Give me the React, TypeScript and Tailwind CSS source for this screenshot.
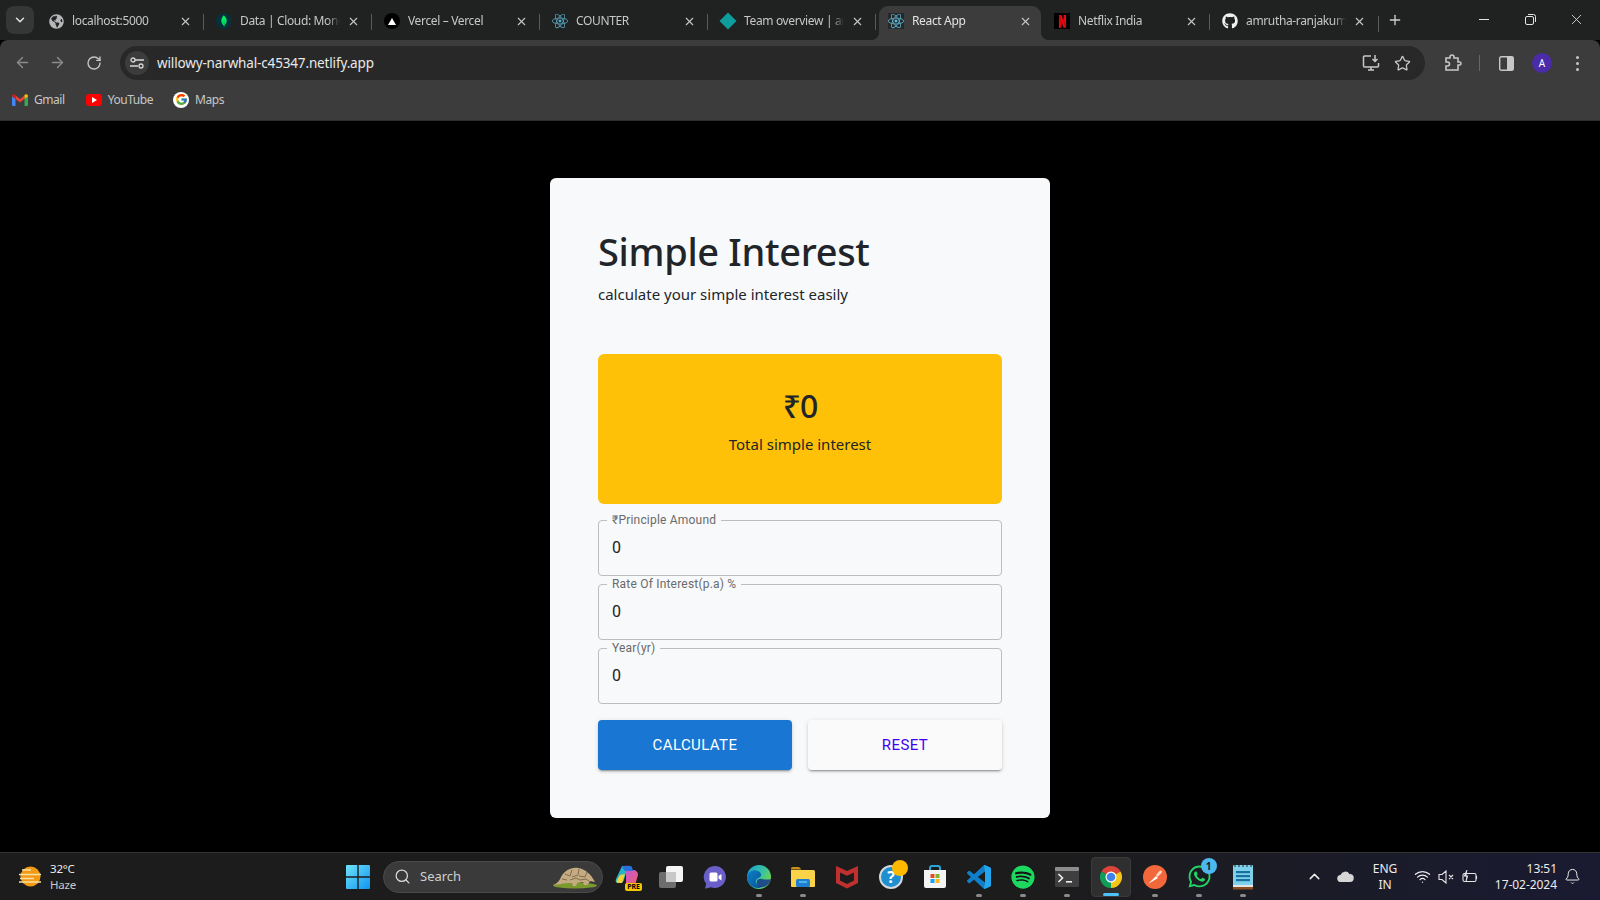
import React from "react";
import { ArrowLeft, ArrowRight, RotateCw, ChevronDown, ChevronUp, X, Plus, Star, Wifi, Bell, Search } from "lucide-react";
import { FaGithub, FaSpotify, FaWhatsapp, FaGlobeAmericas } from "react-icons/fa";
import { FcGoogle } from "react-icons/fc";
import { SiMongodb, SiNetflix, SiReact } from "react-icons/si";

const sans = "font-['Noto_Sans','Open_Sans',sans-serif]";
const roboto = "font-['Roboto','Liberation_Sans',sans-serif]";

function Tab({ icon, title, active, last }: { icon: React.ReactNode; title: string; active?: boolean; last?: boolean }) {
  return (
    <div className={`relative flex shrink-0 items-center ${active ? "z-10 ml-[3px] mr-[1px] h-[34px] w-[162px] rounded-t-[9px] bg-[#3c3c3c] pb-[4px] pl-[9px]" : "h-[34px] w-[168px] pb-[4px] pl-[12px]"}`}>
      {active && <div className="absolute -left-[8px] bottom-0 h-[8px] w-[8px] bg-[radial-gradient(circle_at_0_0,transparent_8px,#3c3c3c_8px)]" />}
      {active && <div className="absolute -right-[8px] bottom-0 h-[8px] w-[8px] bg-[radial-gradient(circle_at_100%_0,transparent_8px,#3c3c3c_8px)]" />}
      <div className="flex h-[16px] w-[16px] shrink-0 items-center justify-center">{icon}</div>
      <span className={`ml-[8px] w-[100px] overflow-hidden whitespace-nowrap text-[12px] tracking-[-0.35px] [mask-image:linear-gradient(to_right,black_88%,transparent)] ${active ? "text-[#e3e3e3]" : "text-[#c7c7c7]"}`}>{title}</span>
      <X className="ml-[7px] shrink-0 text-[#c7c7c7]" size={13} strokeWidth={2} />
      {!last && !active && <div className="absolute right-0 top-[8px] h-[16px] w-px bg-[#5a5a5a]" />}
    </div>
  );
}

function Field({ label }: { label: string }) {
  return (
    <div className={`relative flex h-[56px] items-center rounded-[4px] border border-[#bcbdbe] pl-[13px] ${roboto}`}>
      <span className="absolute -top-[9px] left-[8px] whitespace-nowrap bg-[#f8f9fa] px-[5px] text-[12px] leading-[16px] tracking-[0.2px] text-[#6a6a6a]">{label}</span>
      <span className="text-[16px] text-[#212121]">0</span>
    </div>
  );
}

function Slot({ children, dot, active }: { children: React.ReactNode; dot?: boolean; active?: boolean }) {
  return (
    <div className={`relative mx-[2px] flex h-[40px] w-[40px] shrink-0 items-center justify-center rounded-[4px] ${active ? "border border-[#3a3a3a] bg-[#2f2f2f]" : ""}`}>
      {children}
      {dot && <div className="absolute bottom-0 left-1/2 h-[3px] w-[6px] -translate-x-1/2 rounded-full bg-[#8a8a8a]" />}
      {active && <div className="absolute bottom-0 left-1/2 h-[3px] w-[16px] -translate-x-1/2 rounded-full bg-[#4cc2ff]" />}
    </div>
  );
}

const WinLogo = () => (
  <svg width="24" height="24" viewBox="0 0 24 24">
    <defs><linearGradient id="w" x1="0" y1="0" x2="1" y2="1"><stop offset="0" stopColor="#6fe3fb" /><stop offset="1" stopColor="#0f95ef" /></linearGradient></defs>
    <path fill="url(#w)" d="M0 1a1 1 0 0 1 1-1h10.3v11.3H0zM12.7 0H23a1 1 0 0 1 1 1v10.3H12.7zM0 12.7h11.3V24H1a1 1 0 0 1-1-1zM12.7 12.7H24V23a1 1 0 0 1-1 1H12.7z" />
  </svg>
);

const Pangolin = () => (
  <svg width="46" height="24" viewBox="0 0 46 24">
    <ellipse cx="23" cy="20.5" rx="22" ry="3" fill="#7b9a2e" />
    <path d="M1 20c3-1 6-3 8-8 3-6 10-10 17-9 7 1 13 6 17 14l-5-1c-1 2-2 3-3 4h-3l-1-3-6 1-1 3h-3l-1-3c-4 0-8 0-11 1z" fill="#c4ab82" />
    <path d="M13 9l5 2 2-6M20 12l6-2 1-6M27 11l6 1 2-5M18 15l6-2 4 2 6-1 3 2M10 14l5 1" stroke="#836c4e" strokeWidth="1" fill="none" />
  </svg>
);

const Copilot = () => (
  <div className="relative h-[26px] w-[24px]">
    <svg width="24" height="24" viewBox="0 0 24 24">
      <defs>
        <linearGradient id="c1" x1="0" y1="0" x2="1" y2="1"><stop offset="0" stopColor="#1f9cf0" /><stop offset="1" stopColor="#2ed08e" /></linearGradient>
        <linearGradient id="c2" x1="0" y1="0" x2="1" y2="1"><stop offset="0" stopColor="#c45ad6" /><stop offset="1" stopColor="#f25d6b" /></linearGradient>
      </defs>
      <path d="M7 2h6l-4 14c-.6 2-2 3-4 3H3c-2 0-3-2-2-4z" fill="url(#c1)" />
      <path d="M11 6h7c3 0 5 2 5 5l-2 7c-.6 2-2 3-4 3h-6z" fill="url(#c2)" />
      <path d="M7 3c1-1 8-2 10 0l1 4h-8z" fill="#2a6fdc" />
      <path d="M5 11l5-1-3 9H3c-1 0-2-1-1-3z" fill="#f4d03a" />
    </svg>
    <span className={`absolute -bottom-[1px] right-[-3px] rounded-[2px] bg-[#f7c600] px-[2px] text-[7px] font-bold leading-[8px] text-black ${sans}`}>PRE</span>
  </div>
);

const TaskView = () => (
  <svg width="24" height="24" viewBox="0 0 24 24">
    <rect x="7" y="1" width="17" height="16" rx="2" fill="#f5f5f5" />
    <rect x="0" y="7" width="17" height="16" rx="2" fill="#777" fillOpacity="0.9" />
    <rect x="7" y="7" width="10" height="10" fill="#c8c8c8" />
  </svg>
);

const Meet = () => (
  <svg width="24" height="24" viewBox="0 0 24 24">
    <path d="M12 1a11 11 0 1 1-4 21.3L3 23.5a.6.6 0 0 1-.8-.7l1-4A11 11 0 0 1 12 1z" fill="#6a5fc8" />
    <rect x="6.5" y="7.5" width="8" height="9" rx="1.5" fill="#fff" />
    <path d="M15.5 11l3-2v6.5l-3-2z" fill="#fff" />
  </svg>
);

const Edge = () => (
  <svg width="24" height="24" viewBox="0 0 24 24">
    <defs>
      <linearGradient id="e1" x1="0" y1="0" x2="1" y2="0.6"><stop offset="0" stopColor="#1a9fd8" /><stop offset="0.6" stopColor="#36c3a0" /><stop offset="1" stopColor="#6fd64c" /></linearGradient>
      <linearGradient id="e2" x1="0" y1="0" x2="1" y2="1"><stop offset="0" stopColor="#0a82c8" /><stop offset="1" stopColor="#0c4f96" /></linearGradient>
    </defs>
    <circle cx="12" cy="12" r="12" fill="url(#e1)" />
    <path d="M0 12C1 6 7 4 11 6c3 1.500 4 4 2.500 5.500-2 2-5.500 2-4.500 6 .6 2.500 4 4 7 3.500-2 1.500-3 2-5 2C5 23 0 18 0 12z" fill="url(#e2)" />
    <path d="M24 14c-1 5-6 9-10 8-3-.6-5-3-4-6 .6-2 3-2.500 5-2 3 .6 6 1 9 0z" fill="#1a3f8c" fillOpacity="0.9" />
  </svg>
);

const Folder = () => (
  <svg width="24" height="24" viewBox="0 0 24 24">
    <path d="M0 3.500A1.500 1.500 0 0 1 1.500 2H8l2.500 2.500H0z" fill="#c8901a" />
    <path d="M0 5h22.500A1.500 1.500 0 0 1 24 6.500V21a1 1 0 0 1-1 1H1a1 1 0 0 1-1-1z" fill="#fbd349" />
    <rect x="5" y="14" width="14" height="8" rx="1.500" fill="#1d7fcf" />
    <rect x="8" y="16" width="8" height="2" fill="#4fb1ee" />
  </svg>
);

const McAfee = () => (
  <svg width="24" height="24" viewBox="0 0 24 24">
    <path d="M1 1l11 5 11-5v17l-11 5.500L1 18zM5 7.500v8l7 3.500 7-3.500v-8l-7 3.200z" fill="#c0302e" fillRule="evenodd" />
  </svg>
);

const Help = () => (
  <div className="relative h-[24px] w-[24px]">
    <div className={`flex h-[24px] w-[24px] items-center justify-center rounded-full border-[2px] border-[#d5d9dc] bg-[#1e8fd0] text-[16px] font-bold leading-none text-white ${sans}`}>?</div>
    <div className="absolute -right-[5px] -top-[5px] h-[16px] w-[16px] rounded-full bg-[#fcb900]" />
  </div>
);

const Store = () => (
  <svg width="24" height="24" viewBox="0 0 24 24">
    <path d="M7 6V3a2 2 0 0 1 2-2h6a2 2 0 0 1 2 2v3" stroke="#25a7dd" strokeWidth="2" fill="none" />
    <path d="M1 5h22v16a2 2 0 0 1-2 2H3a2 2 0 0 1-2-2z" fill="#f4f4f4" />
    <rect x="7.500" y="9" width="4" height="4" fill="#ea4a2a" />
    <rect x="12.500" y="9" width="4" height="4" fill="#7eb829" />
    <rect x="7.500" y="14" width="4" height="4" fill="#15a4ea" />
    <rect x="12.500" y="14" width="4" height="4" fill="#fdb81a" />
  </svg>
);

const VSCode = () => (
  <svg width="24" height="24" viewBox="0 0 24 24">
    <path fill="#0f7fc9" d="M23.15 2.587L18.21.21a1.494 1.494 0 0 0-1.705.29l-9.46 8.63-4.12-3.128a.999.999 0 0 0-1.276.057L.327 7.261A1 1 0 0 0 .326 8.74L3.899 12 .326 15.26a1 1 0 0 0 .001 1.479L1.65 17.94a.999.999 0 0 0 1.276.057l4.12-3.128 9.46 8.63a1.492 1.492 0 0 0 1.704.29l4.942-2.377A1.5 1.5 0 0 0 24 20.06V3.939a1.5 1.5 0 0 0-.85-1.352zm-5.146 14.861L10.826 12l7.178-5.448v10.896z" />
    <path fill="#23a6ee" d="M17 .3a1.5 1.5 0 0 1 1.200-.1l4.950 2.387A1.5 1.500 0 0 1 24 3.939V20.060a1.500 1.500 0 0 1-.85 1.352l-4.940 2.377A1.500 1.500 0 0 1 17 23.500l1-6.052V6.552z" />
  </svg>
);

const Terminal = () => (
  <svg width="24" height="24" viewBox="0 0 24 24">
    <rect x="0" y="2" width="24" height="20" rx="1.500" fill="#3f3f3f" />
    <rect x="0" y="2" width="24" height="4" rx="1" fill="#8c8c8c" />
    <path d="M3.500 9l4 4-4 4" stroke="#f0f0f0" strokeWidth="1.600" fill="none" />
    <rect x="11" y="16" width="6" height="1.600" fill="#f0f0f0" />
  </svg>
);

const Chrome = () => (
  <svg width="24" height="24" viewBox="0 0 24 24">
    <path d="M12 12L2.470 6.500A11 11 0 0 1 21.530 6.500z" fill="#db4437" />
    <path d="M12 12l9.530-5.500A11 11 0 0 1 12 23z" fill="#f5c518" />
    <path d="M12 12v11A11 11 0 0 1 2.470 6.500z" fill="#0f9d58" />
    <circle cx="12" cy="12" r="5.500" fill="#fff" />
    <circle cx="12" cy="12" r="4.300" fill="#3f83ea" />
  </svg>
);

const Postman = () => (
  <svg width="24" height="24" viewBox="0 0 24 24">
    <circle cx="12" cy="12" r="12" fill="#f2683a" />
    <path d="M5 19l8-8 2 2z" fill="#fff" />
    <path d="M13 10l4-4.500 2 .5-.5 2-4 4z" fill="#fbd9c9" />
  </svg>
);

const Notepad = () => (
  <svg width="24" height="26" viewBox="0 0 24 26">
    <rect x="2" y="1" width="20" height="24" rx="1" fill="#7fd0ea" />
    <rect x="2" y="21" width="20" height="2" fill="#e5e5e5" />
    <rect x="2" y="23" width="20" height="2.500" fill="#8a4e22" />
    <rect x="5" y="7" width="14" height="2.200" fill="#16719f" />
    <rect x="5" y="11" width="14" height="2.200" fill="#16719f" />
    <rect x="5" y="15" width="14" height="2.200" fill="#16719f" />
    <path d="M4 1v2M8 1v2M12 1v2M16 1v2M20 1v2" stroke="#1e2a30" strokeWidth="1" />
  </svg>
);

export default function App() {
  return (
    <div className={`flex h-screen w-[1600px] flex-col overflow-hidden bg-black ${sans}`}>
      {/* Tab strip */}
      <div className="flex h-[40px] shrink-0 items-end bg-[#202121]">
        <div className="mb-[6px] ml-[6px] mr-[2px] flex h-[28px] w-[28px] shrink-0 items-center justify-center rounded-[8px] bg-[#353636]">
          <ChevronDown size={14} strokeWidth={2.5} className="text-[#e3e3e3]" />
        </div>
        <Tab icon={<FaGlobeAmericas size={15} className="text-[#b5b7b9]" />} title="localhost:5000" />
        <Tab icon={<div className="flex h-[16px] w-[16px] items-center justify-center rounded-full bg-[#07303a]"><SiMongodb size={12} className="text-[#00ed64]" /></div>} title="Data | Cloud: MongoDB" />
        <Tab icon={<div className="flex h-[16px] w-[16px] items-center justify-center rounded-full bg-black"><div className="h-0 w-0 border-x-[4px] border-b-[7px] border-x-transparent border-b-white" /></div>} title="Vercel – Vercel" />
        <Tab icon={<SiReact size={16} className="text-[#5aa9c4]" />} title="COUNTER" />
        <Tab icon={<div className="h-[12px] w-[12px] rotate-45 bg-[#0f9c9c]" />} title="Team overview | anything" />
        <Tab active icon={<div className="flex h-[16px] w-[16px] items-center justify-center bg-[#26292b]"><SiReact size={16} className="text-[#5fb6d2]" /></div>} title="React App" />
        <Tab icon={<div className="flex h-[16px] w-[16px] items-center justify-center bg-black"><SiNetflix size={13} className="text-[#e50914]" /></div>} title="Netflix India" />
        <Tab last icon={<FaGithub size={16} className="text-[#f0f0f0]" />} title="amrutha-ranjakumar" />
        <div className="mb-[8px] h-[16px] w-px bg-[#5a5a5a]" />
        <Plus size={16} strokeWidth={2} className="mb-[12px] ml-[8px] text-[#d0d0d0]" />
        <div className="mb-[12px] ml-auto flex h-[18px] items-center text-[#e3e3e3]">
          <div className="h-[1px] w-[10px] bg-[#e3e3e3]" />
          <svg className="ml-[36px]" width="11" height="11" viewBox="0 0 11 11" fill="none" stroke="currentColor"><rect x="0.500" y="2.500" width="8" height="8" rx="1.500" /><path d="M3 .5h5.500a2 2 0 0 1 2 2V8" /></svg>
          <X size={17} strokeWidth={1.200} className="ml-[32px] mr-[15px]" />
        </div>
      </div>

      {/* Toolbar */}
      <div className="shrink-0 rounded-t-[8px] bg-[#3c3c3c]">
        <div className="flex h-[46px] items-start pt-[6px]">
          <div className="flex w-[120px] shrink-0 items-center pt-[8px] text-[#8b8b8b]">
            <ArrowLeft size={17} strokeWidth={2} className="ml-[14px]" />
            <ArrowRight size={17} strokeWidth={2} className="ml-[18px]" />
            <RotateCw size={16} strokeWidth={2} className="ml-[20px] text-[#c7c7c7]" />
          </div>
          <div className="flex h-[34px] w-[1305px] shrink-0 items-center rounded-full bg-[#282828]">
            <div className="ml-[5px] flex h-[24px] w-[24px] items-center justify-center rounded-full bg-[#3c3c3c]">
              <svg width="14" height="12" viewBox="0 0 14 12" fill="none" stroke="#d8d8d8" strokeWidth="1.300"><path d="M5 3h9M0 9h8" /><circle cx="3" cy="3" r="2" fill="#3c3c3c" /><circle cx="11" cy="9" r="2" fill="#3c3c3c" /></svg>
            </div>
            <span className="ml-[8px] text-[13.5px] tracking-[-0.15px] text-[#e8e8e8]">willowy-narwhal-c45347.netlify.app</span>
            <svg className="ml-auto" width="18" height="18" viewBox="0 0 18 18" fill="none" stroke="#c7c7c7" strokeWidth="1.500"><path d="M9 2H2.500a1 1 0 0 0-1 1v9a1 1 0 0 0 1 1h13a1 1 0 0 0 1-1V9" /><path d="M6 16h6M9 13v3" /><path d="M13 1v6M10.500 5L13 7.500 15.500 5" /></svg>
            <Star size={17} strokeWidth={1.800} className="ml-[14px] mr-[14px] text-[#c7c7c7]" />
          </div>
          <div className="flex flex-1 items-center pt-[7px]">
            <svg className="ml-[19px]" width="18" height="18" viewBox="0 0 18 18" fill="none" stroke="#c7c7c7" strokeWidth="1.600"><path d="M2 4h4V3a2 2 0 0 1 4 0v1h4v4h1.500a1.500 1.500 0 0 1 0 3H14v5H2v-4h1.500a2 2 0 0 0 0-4H2z" /></svg>
            <div className="ml-[17px] h-[16px] w-px bg-[#666]" />
            <svg className="ml-[19px]" width="15" height="15" viewBox="0 0 15 15"><rect x="0.700" y="0.700" width="13.600" height="13.600" rx="1.500" fill="none" stroke="#c7c7c7" strokeWidth="1.400" /><rect x="8" y="1" width="6" height="13" fill="#c7c7c7" /></svg>
            <div className="ml-[18px] flex h-[20px] w-[20px] items-center justify-center rounded-full bg-[#4a2ba8] text-[10px] text-white">A</div>
            <div className="ml-[24px] flex flex-col gap-[3px]">
              <div className="h-[3px] w-[3px] rounded-full bg-[#c7c7c7]" />
              <div className="h-[3px] w-[3px] rounded-full bg-[#c7c7c7]" />
              <div className="h-[3px] w-[3px] rounded-full bg-[#c7c7c7]" />
            </div>
          </div>
        </div>
        <div className="flex h-[35px] items-center border-b border-[#2d2d2d] pb-[7px] pl-[12px] text-[12px] tracking-[-0.45px] text-[#c7c7c7]">
          <svg width="16" height="12" viewBox="0 0 16 12">
            <path d="M0 2v9a1 1 0 0 0 1 1h2.500V5z" fill="#4285f4" />
            <path d="M16 2v9a1 1 0 0 1-1 1h-2.500V5z" fill="#34a853" />
            <path d="M3.500 5V1.500L8 5l4.500-3.500V5L8 8.500z" fill="#ea4335" />
            <path d="M0 2c0-1.500 1.800-2.300 3-1.400L3.500 1v4L0 2.500z" fill="#c5221f" />
            <path d="M16 2c0-1.500-1.800-2.300-3-1.400L12.500 1v4L16 2.500z" fill="#fbbc04" />
          </svg>
          <span className="ml-[6px]">Gmail</span>
          <div className="ml-[21px] flex h-[12px] w-[16px] items-center justify-center rounded-[3px] bg-[#ff0000]">
            <div className="ml-[1px] h-0 w-0 border-y-[3px] border-l-[5px] border-y-transparent border-l-white" />
          </div>
          <span className="ml-[6px]">YouTube</span>
          <div className="ml-[20px] flex h-[16px] w-[16px] items-center justify-center rounded-full bg-white"><FcGoogle size={13} /></div>
          <span className="ml-[6px]">Maps</span>
        </div>
      </div>

      {/* Page */}
      <main className="flex min-h-0 flex-1 items-start justify-center bg-black pt-[57px]">
        <div className="w-[500px] rounded-[6px] bg-[#f8f9fa] p-12 text-[#212529]">
          <h1 className="mt-[1px] text-[38px] font-medium leading-[48px] tracking-[-0.33px]">Simple Interest</h1>
          <p className="mt-[7px] text-[15px] leading-[24px]">calculate your simple interest easily</p>
          <div className="mt-12 flex h-[150px] flex-col items-center rounded-[6px] bg-[#ffc107] pt-[33px]">
            <h2 className="text-[32px] font-medium leading-[38px] tracking-[-1px]">₹0</h2>
            <p className="mt-[7px] text-[15px] leading-[24px]">Total simple interest</p>
          </div>
          <div className="mt-4 flex flex-col gap-2">
            <Field label="₹Principle Amound" />
            <Field label="Rate Of Interest(p.a) %" />
            <Field label="Year(yr)" />
          </div>
          <div className={`mt-4 flex gap-4 text-[15px] tracking-[0.4px] ${roboto}`}>
            <button className="flex h-[50px] flex-1 items-center justify-center rounded-[4px] bg-[#1976d2] text-white shadow-[0_3px_1px_-2px_rgba(0,0,0,0.2),0_2px_2px_0_rgba(0,0,0,0.14),0_1px_5px_0_rgba(0,0,0,0.12)]">CALCULATE</button>
            <button className="flex h-[50px] flex-1 items-center justify-center rounded-[4px] bg-[#fafafa] text-[#3f00f5] shadow-[0_3px_1px_-2px_rgba(0,0,0,0.2),0_2px_2px_0_rgba(0,0,0,0.14),0_1px_5px_0_rgba(0,0,0,0.12)]">RESET</button>
          </div>
        </div>
      </main>

      {/* Taskbar */}
      <div className="flex h-[48px] shrink-0 items-center border-t border-[#333] bg-gradient-to-r from-[#1c1c1c] from-65% to-[#1a1a32] text-[#ececec]">
        <div className="flex w-[346px] shrink-0 items-center pl-[18px]">
          <svg width="25" height="25" viewBox="0 0 25 25">
            <circle cx="12.500" cy="12.500" r="10" fill="#f39a12" />
            <path d="M4 6h9M1 10.500h22M2 14.500h14M1 18h22" stroke="#f7e0a8" strokeWidth="1.600" />
          </svg>
          <div className="ml-[7px] flex flex-col text-[11.5px] leading-[16px]">
            <span className="tracking-[-0.2px]">32°C</span>
            <span className="tracking-[-0.2px] text-[#c8c8c8]">Haze</span>
          </div>
        </div>
        <WinLogo />
        <div className="ml-[13px] flex h-[32px] w-[220px] shrink-0 items-center rounded-full border border-[#4a4a4a] bg-[#3a3a3a] pl-[10px]">
          <Search size={17} strokeWidth={1.800} className="text-[#d8d8d8]" />
          <span className="ml-[9px] text-[13px] text-[#cfcfcf]">Search</span>
          <div className="ml-auto mr-[4px]"><Pangolin /></div>
        </div>
        <div className="flex items-center pl-[2px]">
          <Slot><Copilot /></Slot>
          <Slot><TaskView /></Slot>
          <Slot><Meet /></Slot>
          <Slot dot><Edge /></Slot>
          <Slot dot><Folder /></Slot>
          <Slot><McAfee /></Slot>
          <Slot><Help /></Slot>
          <Slot><Store /></Slot>
          <Slot dot><VSCode /></Slot>
          <Slot dot><div className="flex h-[24px] w-[24px] items-center justify-center rounded-full bg-[#141414]"><FaSpotify size={24} className="text-[#1ed760]" /></div></Slot>
          <Slot dot><Terminal /></Slot>
          <Slot active><Chrome /></Slot>
          <Slot dot><Postman /></Slot>
          <Slot dot>
            <div className="relative">
              <FaWhatsapp size={25} className="text-[#25d366]" />
              <span className="absolute -right-[5px] -top-[6px] flex h-[16px] w-[16px] items-center justify-center rounded-full bg-[#4db8ef] text-[10px] font-bold text-[#10222c]">1</span>
            </div>
          </Slot>
          <Slot dot><Notepad /></Slot>
        </div>
        <ChevronUp size={17} strokeWidth={2} className="ml-[41px] text-[#efefef]" />
        <svg className="ml-[14px]" width="17" height="11" viewBox="0 0 17 11"><path d="M4 11a3.500 3.500 0 0 1-.5-7A5 5 0 0 1 12.500 3 4 4 0 0 1 13 11z" fill="#d6d6d6" /></svg>
        <div className="ml-[16px] flex w-[30px] flex-col items-center text-[12px] leading-[16px]"><span>ENG</span><span>IN</span></div>
        <Wifi size={17} strokeWidth={1.800} className="ml-[14px]" />
        <svg className="ml-[7px]" width="17" height="14" viewBox="0 0 17 14" fill="none" stroke="#e5e5e5" strokeWidth="1.100"><path d="M1 4.500h3L8 1v12L4 9.500H1zM11 5l4 4M15 5l-4 4" /></svg>
        <svg className="ml-[7px]" width="17" height="14" viewBox="0 0 17 14" fill="none" stroke="#e5e5e5" strokeWidth="1.100"><rect x="1" y="3.500" width="13" height="8" rx="1.500" /><path d="M14.500 6v3" /><path d="M5 0L2.500 6h3L4 11" fill="#e5e5e5" /></svg>
        <div className="ml-auto flex flex-col items-end text-[12px] leading-[16px] tracking-[-0.05px]"><span>13:51</span><span>17-02-2024</span></div>
        <Bell size={17} strokeWidth={1.400} className="ml-[7px] mr-[19px]" />
      </div>
    </div>
  );
}
